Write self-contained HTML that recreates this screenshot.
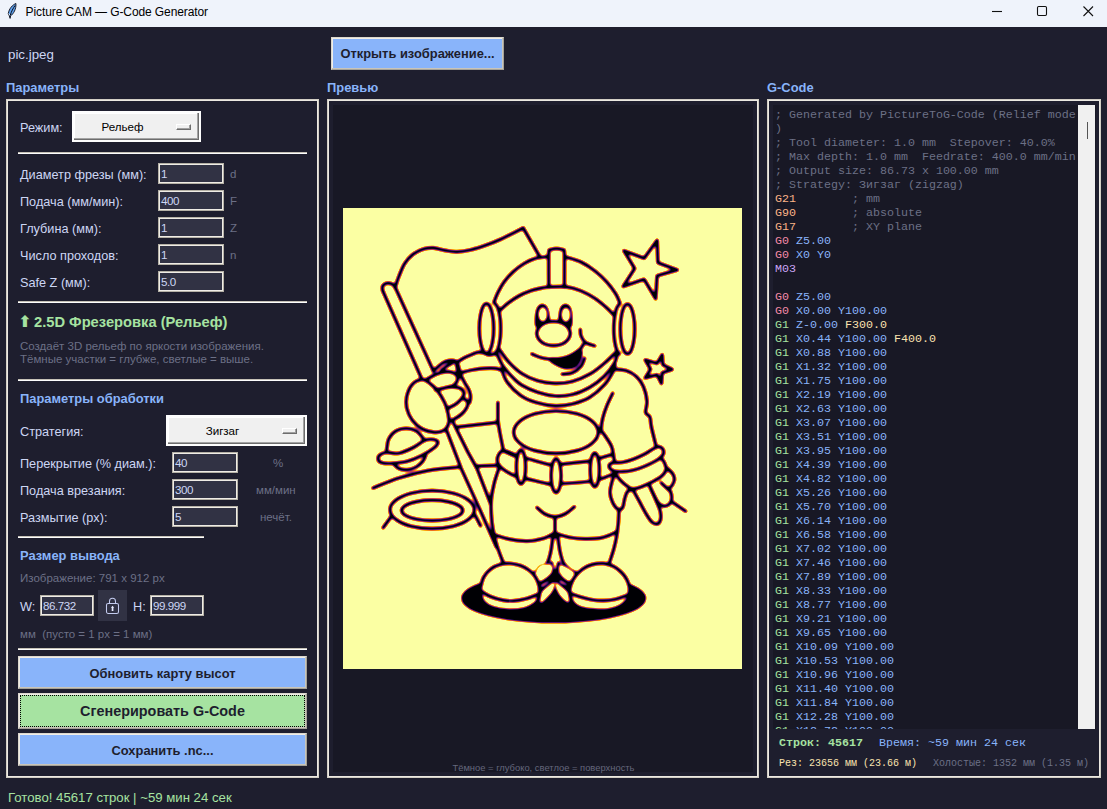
<!DOCTYPE html>
<html lang="ru">
<head>
<meta charset="utf-8">
<title>Picture CAM — G-Code Generator</title>
<style>
*{box-sizing:border-box;margin:0;padding:0}
html,body{width:1107px;height:809px;overflow:hidden;background:#1e1e2e}
body{position:relative;font-family:"Liberation Sans","DejaVu Sans",sans-serif;font-size:12.6px;color:#cdd6f4}
.a{position:absolute;white-space:nowrap;line-height:1}
.titlebar{left:0;top:0;width:1107px;height:27px;background:#eff3fb}
.ttl{left:25.6px;top:6px;font-size:12px;color:#000;letter-spacing:-0.1px}
.frame{border:1px solid #d2cec4;box-shadow:inset 0 0 0 1px #ece9e2}
.hd{color:#89b4fa;font-weight:bold;font-size:12.9px;margin-top:1px}
.lbl{color:#cdd6f4;font-size:12.7px;margin-top:1px}
.dim{color:#6c7086;font-size:11.5px}
.ent{background:#313244;border:1px solid #b5b1a6;box-shadow:inset 0 0 0 1px #efece6;height:21px;color:#cdd6f4;font-size:11.6px;letter-spacing:-0.45px;padding:4px 0 0 2px;line-height:1}
.sep{height:2px;border-top:1px solid #c6c2b7;border-bottom:1px solid #fdfdfd}
.om{background:#f0f0f0;border:2px solid #fdfdfd;box-shadow:inset -1px -1px 0 #6d6d6d, inset -2px -2px 0 #a3a3a3, inset 1px 1px 0 #fff;color:#000;font-size:11.6px;text-align:center}
.om i{position:absolute;display:block;width:15px;height:6px;background:#f0f0f0;border:1px solid;border-color:#ffffff #6d6d6d #6d6d6d #ffffff;box-shadow:inset -1px -1px 0 #a0a0a0}
.btn{border:1px solid;border-color:#dcd8ce #a5a298 #a5a298 #dcd8ce;box-shadow:inset -1px -1px 0 #c9c5ba,inset 1px 1px 0 #f0ede6;color:#1e1e2e;font-weight:bold;text-align:center}
.mono{font-family:"Liberation Mono","DejaVu Sans Mono",monospace}
pre.code{left:775px;top:108px;width:301px;font-family:"Liberation Mono","DejaVu Sans Mono",monospace;font-size:11.667px;line-height:14px;color:#cdd6f4;white-space:pre;overflow:hidden;height:621px}
.c{color:#6c7086}.o{color:#fab387}.r{color:#f38ba8}.m{color:#cba6f7}.g{color:#a6e3a1}.b{color:#89b4fa}.y{color:#f9e2af}
</style>
</head>
<body>
<!-- title bar -->
<div class="a titlebar"></div>
<svg class="a" style="left:7px;top:3px" width="12" height="17" viewBox="0 0 12 17"><path d="M8.9 0.5C5.6 1.8 2 5.6 1.3 10.6L2.2 12.6 3.1 15.4 3.6 12.9C6.4 10.9 9.4 6.2 8.9 0.5Z" fill="#5fa3f2" stroke="#0a0a14" stroke-width="0.9" stroke-linejoin="round"/><path d="M8.1 2.4C6.2 5.2 4.2 8.6 3.1 12.8" stroke="#0a0a14" stroke-width="1" fill="none"/><path d="M1.9 10.6l0.9 1.7" stroke="#fff" stroke-width="0.9"/></svg>
<div class="a ttl">Picture CAM — G-Code Generator</div>
<svg class="a" style="left:980px;top:0" width="127" height="27" viewBox="0 0 127 27"><g stroke="#111" stroke-width="1.1" fill="none"><path d="M12 11.5h10"/><rect x="57.5" y="6.5" width="9" height="9" rx="1.2"/><path d="M103.5 6.5l9.5 9.5M113 6.5l-9.5 9.5"/></g></svg>

<!-- top row -->
<div class="a lbl" style="left:8px;top:47px;font-size:13.3px">pic.jpeg</div>
<div class="a btn" style="left:331px;top:37px;width:173px;height:33px;background:#89b4fa;font-size:12.9px;padding-top:10px">Открыть изображение...</div>

<!-- section headers -->
<div class="a hd" style="left:6px;top:81px">Параметры</div>
<div class="a hd" style="left:327px;top:81px">Превью</div>
<div class="a hd" style="left:767px;top:81px">G-Code</div>

<!-- frames -->
<div class="a frame" style="left:6px;top:99px;width:313px;height:679px"></div>
<div class="a frame" style="left:327px;top:99px;width:432px;height:679px"></div>
<div class="a frame" style="left:767px;top:99px;width:334px;height:679px"></div>

<!-- LEFT PANEL -->
<div class="a lbl" style="left:20px;top:121px">Режим:</div>
<div class="a om" style="left:72px;top:111px;width:129px;height:31px;padding:8px 28px 0 0">Рельеф<i style="left:102px;top:11px"></i></div>
<div class="a sep" style="left:18px;top:152px;width:289px"></div>

<div class="a lbl" style="left:20px;top:168px">Диаметр фрезы (мм):</div>
<div class="a ent" style="left:158px;top:163px;width:66px">1</div>
<div class="a dim" style="left:230px;top:169px">d</div>
<div class="a lbl" style="left:20px;top:195px">Подача (мм/мин):</div>
<div class="a ent" style="left:158px;top:190px;width:66px">400</div>
<div class="a dim" style="left:230px;top:196px">F</div>
<div class="a lbl" style="left:20px;top:222px">Глубина (мм):</div>
<div class="a ent" style="left:158px;top:217px;width:66px">1</div>
<div class="a dim" style="left:230px;top:223px">Z</div>
<div class="a lbl" style="left:20px;top:249px">Число проходов:</div>
<div class="a ent" style="left:158px;top:244px;width:66px">1</div>
<div class="a dim" style="left:230px;top:250px">n</div>
<div class="a lbl" style="left:20px;top:276px">Safe Z (мм):</div>
<div class="a ent" style="left:158px;top:271px;width:66px">5.0</div>
<div class="a sep" style="left:18px;top:301px;width:289px"></div>

<div class="a" style="left:20px;top:315px;color:#a6e3a1;font-weight:bold;font-size:14.7px"><span style="display:inline-block;width:14px;font-family:'DejaVu Sans',sans-serif;font-size:16px;line-height:10px;margin-left:-2px;margin-right:2px">⬆</span>2.5D Фрезеровка (Рельеф)</div>
<div class="a dim" style="left:20px;top:341px">Создаёт 3D рельеф по яркости изображения.</div>
<div class="a dim" style="left:20px;top:354px">Тёмные участки = глубже, светлые = выше.</div>
<div class="a sep" style="left:18px;top:379px;width:289px"></div>

<div class="a hd" style="left:20px;top:392px">Параметры обработки</div>
<div class="a lbl" style="left:20px;top:425px">Стратегия:</div>
<div class="a om" style="left:166px;top:415px;width:141px;height:31px;padding:8px 28px 0 0">Зигзаг<i style="left:114px;top:11px"></i></div>
<div class="a lbl" style="left:20px;top:457px">Перекрытие (% диам.):</div>
<div class="a ent" style="left:172px;top:452px;width:66px">40</div>
<div class="a dim" style="left:273px;top:458px">%</div>
<div class="a lbl" style="left:20px;top:484px">Подача врезания:</div>
<div class="a ent" style="left:172px;top:479px;width:66px">300</div>
<div class="a dim" style="left:256px;top:485px">мм/мин</div>
<div class="a lbl" style="left:20px;top:511px">Размытие (px):</div>
<div class="a ent" style="left:172px;top:506px;width:66px">5</div>
<div class="a dim" style="left:260px;top:512px">нечёт.</div>
<div class="a sep" style="left:18px;top:536px;width:186px"></div>

<div class="a hd" style="left:20px;top:549px">Размер вывода</div>
<div class="a dim" style="left:20px;top:573px">Изображение: 791 x 912 px</div>
<div class="a lbl" style="left:20px;top:600px">W:</div>
<div class="a ent" style="left:40px;top:595px;width:54px">86.732</div>
<div class="a" style="left:98px;top:590px;width:29px;height:31px;background:#313244"></div>
<svg class="a" style="left:104px;top:596px" width="17" height="19" viewBox="0 0 17 19"><path d="M5.5 7.2V5.3a3 3 0 0 1 6 0V7.2" fill="none" stroke="#c3cbee" stroke-width="1.05"/><rect x="2.5" y="7.4" width="12" height="10.1" rx="1.7" fill="none" stroke="#c3cbee" stroke-width="1.05"/><path d="M7.7 11.2h1.7v3.9H7.7zM6.9 11.8l1.65-2.1 1.65 2.1z" fill="#e6ebff"/></svg>
<div class="a lbl" style="left:133px;top:600px">H:</div>
<div class="a ent" style="left:150px;top:595px;width:54px">99.999</div>
<div class="a dim" style="left:20px;top:629px">мм&nbsp;&nbsp;(пусто = 1 px = 1 мм)</div>
<div class="a sep" style="left:18px;top:648px;width:289px"></div>

<div class="a btn" style="left:18px;top:656px;width:289px;height:33px;background:#89b4fa;font-size:12.9px;padding-top:11px">Обновить карту высот</div>
<div class="a btn" style="left:18px;top:693px;width:289px;height:36px;background:#a6e3a1;font-size:14.4px;padding-top:10px">Сгенерировать G-Code<span class="a" style="left:1px;top:1px;right:1px;bottom:1px;border:1px dotted #000"></span></div>
<div class="a btn" style="left:18px;top:733px;width:289px;height:33px;background:#89b4fa;font-size:12.9px;padding-top:11px">Сохранить .nc...</div>

<div class="a lbl" style="left:8px;top:790px;color:#a6e3a1;font-size:13.2px">Готово! 45617 строк | ~59 мин 24 сек</div>

<!-- PREVIEW -->
<div class="a" style="left:333px;top:105px;width:420px;height:667px;background:#181825"></div>
<div class="a" style="left:343px;top:208px;width:399px;height:461px;background:#fcffa4"></div>
<!--ASTRO_START--><svg class="a" style="left:343px;top:208px" width="399" height="461" viewBox="343 208 399 461"><filter id="inf" filterUnits="userSpaceOnUse" x="343" y="208" width="399" height="461" color-interpolation-filters="sRGB"><feGaussianBlur stdDeviation="1.0"/><feComponentTransfer><feFuncR type="linear" slope="1.6" intercept="-0.15"/><feFuncG type="linear" slope="1.6" intercept="-0.15"/><feFuncB type="linear" slope="1.6" intercept="-0.15"/></feComponentTransfer><feComponentTransfer><feFuncR type="table" tableValues="0 .086 .259 .416 .576 .737 .867 .953 .988 .965 .988"/><feFuncG type="table" tableValues="0 .043 .039 .09 .149 .216 .318 .471 .647 .843 1"/><feFuncB type="table" tableValues=".016 .224 .408 .431 .404 .329 .227 .098 .039 .275 .643"/></feComponentTransfer></filter><g filter="url(#inf)" fill="none" stroke="#000" stroke-width="3.7" stroke-linecap="round" stroke-linejoin="round"><rect x="333" y="198" width="419" height="481" fill="#fff" stroke="none"/><path d="M644.5 598.3C644.5 602.2 639.9 606.6 632.3 609.9C624.8 613.2 612.2 616.5 599.1 618.4C586.0 620.3 568.8 621.5 553.7 621.5C538.6 621.5 521.4 620.3 508.3 618.4C495.2 616.5 482.6 613.2 475.1 609.9C467.5 606.6 462.9 602.2 462.9 598.3C462.9 594.4 467.5 590.0 475.1 586.7C482.6 583.4 495.2 580.1 508.3 578.2C521.4 576.3 538.6 575.1 553.7 575.1C568.8 575.1 586.0 576.3 599.1 578.2C612.2 580.1 624.8 583.4 632.3 586.7C639.9 590.0 644.5 594.4 644.5 598.3Z" fill="#000"/><path d="M395.3 287.0C395.9 285.2 397.3 280.3 398.9 276.4C400.5 272.5 402.3 267.1 404.7 263.4C407.1 259.7 410.3 256.4 413.4 254.0C416.5 251.6 420.1 249.9 423.5 248.9C426.9 247.9 430.1 247.7 433.7 247.9C437.3 248.2 441.3 249.8 445.2 250.4C449.1 251.1 452.4 251.9 456.8 251.8C461.2 251.7 466.5 250.8 471.3 249.7C476.1 248.6 480.9 247.0 485.7 245.3C490.5 243.6 495.4 241.7 500.2 239.5C505.0 237.3 510.9 234.2 514.7 232.3C518.5 230.4 521.8 228.7 523.2 228.0"/><path d="M523.2 228.0L540.0 257.2"/><path d="M382.6 290.5C382.6 289.8 381.9 287.6 382.4 286.5C382.8 285.4 384.2 284.2 385.3 283.6C386.4 283.1 387.7 283.0 389.0 283.2C390.3 283.4 391.9 283.8 393.0 284.6C394.1 285.4 395.1 287.4 395.5 288.0"/><path d="M382.6 290.5L421.9 379.2"/><path d="M395.5 288.0L433.4 371.1"/><path d="M446.8 431.0L461.2 468.4L481.4 512.9L496.4 547.0"/><path d="M452.5 421.0L467.9 452.1L477.0 468.5L490.3 503.0"/><path d="M493.9 302.3C494.6 300.6 496.3 295.8 498.0 292.4C499.7 288.9 501.7 285.1 504.3 281.6C506.9 278.1 510.1 274.6 513.4 271.6C516.7 268.6 520.6 265.7 524.2 263.5C527.8 261.3 531.2 259.6 535.0 258.5C538.8 257.4 544.8 257.0 546.8 256.7"/><path d="M565.8 256.9C568.3 257.8 576.0 259.6 581.0 262.0C586.0 264.4 591.2 268.0 595.5 271.4C599.8 274.8 603.6 278.5 607.0 282.2C610.4 285.9 613.5 290.3 615.7 293.8C617.9 297.3 619.3 301.6 620.0 303.2"/><path d="M499.8 310.5C501.1 309.3 504.7 305.6 507.9 303.2C511.1 300.8 514.9 298.1 518.8 296.0C522.7 293.9 527.5 292.0 531.4 290.6C535.3 289.2 539.3 288.5 542.3 287.9C545.3 287.3 545.5 287.2 549.5 287.0C553.5 286.8 561.2 286.2 566.5 286.8C571.8 287.4 576.2 288.9 581.0 290.9C585.8 292.9 591.2 295.9 595.5 298.8C599.8 301.7 603.9 305.4 607.0 308.2C610.1 311.0 613.1 314.3 614.3 315.5"/><path d="M548.8 287.0C548.8 281.4 548.6 259.7 548.8 253.5C549.0 247.3 549.4 250.8 550.2 250.0C551.0 249.2 552.0 249.0 553.5 248.8C555.0 248.6 557.9 248.6 559.5 248.8C561.1 249.0 562.2 249.2 563.0 250.0C563.8 250.8 564.2 247.3 564.4 253.5C564.6 259.7 564.4 281.4 564.4 287.0"/><path d="M493.7 328.5C493.7 332.7 493.3 337.4 492.7 341.0C492.1 344.6 491.1 348.1 490.1 350.2C489.1 352.2 487.7 353.5 486.5 353.5C485.3 353.5 483.9 352.2 482.9 350.2C481.9 348.1 480.9 344.6 480.3 341.0C479.7 337.4 479.3 332.7 479.3 328.5C479.3 324.3 479.7 319.6 480.3 316.0C480.9 312.4 481.9 308.9 482.9 306.8C483.9 304.8 485.3 303.5 486.5 303.5C487.7 303.5 489.1 304.8 490.1 306.8C491.1 308.9 492.1 312.4 492.7 316.0C493.3 319.6 493.7 324.3 493.7 328.5Z"/><path d="M495.1 303.7C495.5 304.2 496.6 305.1 497.3 306.5C498.0 307.9 498.6 309.9 499.1 312.1C499.6 314.3 500.0 317.0 500.3 319.7C500.6 322.5 500.7 325.6 500.7 328.5C500.7 331.4 500.6 334.5 500.3 337.3C500.0 340.0 499.6 342.7 499.1 344.9C498.6 347.1 498.0 349.1 497.3 350.5C496.6 351.9 495.5 352.8 495.1 353.3"/><path d="M634.7 329.0C634.7 333.2 634.3 337.9 633.7 341.5C633.1 345.1 632.1 348.6 631.1 350.7C630.1 352.7 628.7 354.0 627.5 354.0C626.3 354.0 624.9 352.7 623.9 350.7C622.9 348.6 621.9 345.1 621.3 341.5C620.7 337.9 620.3 333.2 620.3 329.0C620.3 324.8 620.7 320.1 621.3 316.5C621.9 312.9 622.9 309.4 623.9 307.3C624.9 305.3 626.3 304.0 627.5 304.0C628.7 304.0 630.1 305.3 631.1 307.3C632.1 309.4 633.1 312.9 633.7 316.5C634.3 320.1 634.7 324.8 634.7 329.0Z"/><path d="M619.4 353.8C619.0 353.3 617.9 352.4 617.2 351.0C616.5 349.6 615.9 347.6 615.4 345.4C614.9 343.2 614.5 340.5 614.2 337.8C613.9 335.0 613.8 331.9 613.8 329.0C613.8 326.1 613.9 323.0 614.2 320.2C614.5 317.5 614.9 314.8 615.4 312.6C615.9 310.4 616.5 308.4 617.2 307.0C617.9 305.6 619.0 304.7 619.4 304.2"/><path d="M499.0 349.0C500.6 351.2 504.9 357.9 508.7 362.0C512.5 366.1 516.9 370.4 521.7 373.5C526.5 376.6 532.1 379.2 537.6 380.8C543.1 382.4 549.2 383.3 555.0 383.4C560.8 383.5 566.5 383.0 572.3 381.5C578.1 380.0 584.4 377.2 589.7 374.2C595.0 371.2 599.9 367.0 604.2 363.4C608.5 359.8 613.8 354.3 615.7 352.5"/><path d="M497.3 354.7C498.3 356.6 500.5 362.4 503.1 366.3C505.8 370.2 510.1 374.8 513.2 377.9C516.3 381.0 517.6 382.7 521.7 385.1C525.8 387.5 532.1 390.5 537.6 392.3C543.1 394.1 549.2 395.6 555.0 396.0C560.8 396.4 566.5 395.9 572.3 394.5C578.1 393.1 584.4 390.3 589.7 387.3C595.0 384.3 600.1 380.4 604.2 376.4C608.3 372.4 612.1 367.0 614.3 363.4C616.5 359.8 616.7 356.1 617.2 354.7"/><path d="M501.6 369.2C502.5 371.4 504.1 377.9 507.2 382.2C510.3 386.5 515.5 391.8 520.3 395.2C525.1 398.6 530.4 400.8 536.2 402.6C542.0 404.4 549.0 405.6 555.0 405.8C561.0 406.0 566.5 405.4 572.3 404.0C578.1 402.6 584.4 400.5 589.7 397.4C595.0 394.2 600.4 389.3 604.2 385.1C608.1 380.9 611.0 375.5 612.8 372.1C614.6 368.7 614.6 366.0 615.0 364.8"/><path d="M537.1 326.0C535.3 324.2 536.7 316.1 537.0 313.0C537.3 309.9 538.1 308.5 539.0 307.2C539.9 305.9 541.2 305.4 542.3 305.4C543.4 305.4 544.7 305.9 545.6 307.2C546.5 308.5 547.2 310.2 547.6 313.0C548.0 315.8 549.5 321.8 547.8 324.0C546.0 326.2 538.9 327.8 537.1 326.0Z" fill="#000"/><path d="M570.1 326.0C571.8 324.2 570.8 316.1 570.6 313.0C570.4 309.9 569.6 308.5 568.8 307.2C567.9 305.9 566.6 305.4 565.5 305.4C564.4 305.4 563.0 305.9 562.2 307.2C561.4 308.5 560.8 310.2 560.5 313.0C560.2 315.8 558.8 321.8 560.4 324.0C562.0 326.2 568.4 327.8 570.1 326.0Z" fill="#000"/><path d="M546.9 314.3C546.9 315.4 546.7 316.7 546.4 317.7C546.0 318.7 545.4 319.6 544.8 320.2C544.3 320.8 543.5 321.1 542.8 321.1C542.1 321.1 541.3 320.8 540.8 320.2C540.2 319.6 539.6 318.7 539.2 317.7C538.9 316.7 538.7 315.4 538.7 314.3C538.7 313.2 538.9 311.9 539.2 310.9C539.6 309.9 540.2 309.0 540.8 308.4C541.3 307.8 542.1 307.5 542.8 307.5C543.5 307.5 544.3 307.8 544.8 308.4C545.4 309.0 546.0 309.9 546.4 310.9C546.7 311.9 546.9 313.2 546.9 314.3Z" fill="#fff" stroke-width="0.1"/><path d="M570.0 314.7C570.0 315.8 569.8 317.1 569.5 318.1C569.1 319.1 568.5 320.0 567.9 320.6C567.4 321.2 566.6 321.5 565.9 321.5C565.2 321.5 564.4 321.2 563.9 320.6C563.3 320.0 562.7 319.1 562.3 318.1C562.0 317.1 561.8 315.8 561.8 314.7C561.8 313.6 562.0 312.3 562.3 311.3C562.7 310.3 563.3 309.4 563.9 308.8C564.4 308.2 565.2 307.9 565.9 307.9C566.6 307.9 567.4 308.2 567.9 308.8C568.5 309.4 569.1 310.3 569.5 311.3C569.8 312.3 570.0 313.6 570.0 314.7Z" fill="#fff" stroke-width="0.1"/><path d="M570.3 333.5C570.3 335.5 569.4 337.8 568.0 339.6C566.6 341.4 564.3 343.0 561.9 344.1C559.5 345.1 556.3 345.7 553.5 345.7C550.7 345.7 547.5 345.1 545.1 344.1C542.7 343.0 540.4 341.4 539.0 339.6C537.6 337.8 536.7 335.5 536.7 333.5C536.7 331.5 537.6 329.2 539.0 327.4C540.4 325.6 542.7 324.0 545.1 322.9C547.5 321.9 550.7 321.3 553.5 321.3C556.3 321.3 559.5 321.9 561.9 322.9C564.3 324.0 566.6 325.6 568.0 327.4C569.4 329.2 570.3 331.5 570.3 333.5Z" fill="#fff"/><path d="M580.3 329.4C580.4 330.5 580.1 333.7 581.0 335.9C581.9 338.1 583.1 340.8 585.4 342.4C587.7 344.0 593.2 345.2 594.8 345.8"/><path d="M550.6 359.8C550.6 360.7 555.2 363.5 557.9 364.8C560.5 366.1 563.6 367.6 566.5 367.7C569.4 367.8 573.0 367.1 575.2 365.6C577.4 364.2 578.8 361.4 579.6 359.0C580.5 356.6 582.0 351.5 580.3 351.1C578.6 350.8 573.1 355.5 569.4 356.9C565.7 358.3 561.0 358.8 557.9 359.3C554.8 359.8 550.6 358.9 550.6 359.8Z" fill="#000"/><path d="M531.8 354.0C533.7 354.7 539.0 357.5 543.4 358.3C547.8 359.1 553.6 359.4 557.9 359.0C562.2 358.6 565.8 357.8 569.4 356.2C573.0 354.6 577.3 351.6 579.6 349.7C581.9 347.8 582.6 345.5 583.2 344.6"/><path d="M562.2 374.2C563.9 374.0 569.2 374.1 572.3 372.8C575.4 371.5 579.0 368.7 581.0 366.3C583.0 363.9 584.0 359.6 584.6 358.3"/><path d="M456.7 362.2C458.4 361.3 463.2 358.4 466.7 356.7C470.2 355.0 474.9 352.8 477.9 352.2C480.9 351.6 482.6 352.8 484.5 353.3C486.4 353.8 486.9 355.0 489.0 355.0C491.1 355.0 495.5 353.6 496.8 353.3"/><path d="M460.6 372.8C462.6 372.3 468.3 370.7 472.3 370.0C476.3 369.3 480.6 368.7 484.5 368.4C488.4 368.1 492.9 368.1 495.7 368.4C498.5 368.7 500.3 369.7 501.2 370.0"/><path d="M422.2 379.5C419.2 379.7 414.8 381.6 412.2 384.5C409.6 387.4 407.6 392.8 406.7 396.7C405.8 400.6 405.8 403.9 406.7 407.8C407.6 411.7 409.6 416.6 412.2 420.1C414.8 423.6 418.5 427.0 422.2 429.0C425.9 431.0 430.8 432.1 434.5 432.3C438.2 432.5 442.1 431.8 444.5 430.1C446.9 428.4 448.3 425.3 448.9 422.3C449.4 419.3 448.5 415.6 447.8 412.3C447.1 409.0 446.2 405.8 444.5 402.3C442.8 398.8 440.2 394.4 437.8 391.2C435.4 388.0 432.6 385.3 430.0 383.4C427.4 381.4 425.2 379.3 422.2 379.5Z"/><path d="M426.7 379.5C428.4 378.6 433.2 375.2 436.7 373.9C440.2 372.6 444.6 371.7 447.8 371.7C451.0 371.7 453.9 372.7 455.6 373.9C457.3 375.1 458.0 377.1 457.8 378.9C457.6 380.7 455.9 383.5 454.5 384.8C453.1 386.1 450.3 386.5 449.5 386.8"/><path d="M435.5 389.8C436.6 389.6 439.6 389.1 442.0 388.6C444.4 388.1 447.3 387.0 450.1 386.9C452.9 386.8 456.7 386.9 459.0 387.8C461.3 388.7 463.4 390.6 464.0 392.3C464.6 394.0 463.5 396.0 462.3 397.8C461.1 399.6 459.1 401.6 456.7 403.4C454.3 405.2 449.3 407.6 447.8 408.4"/><path d="M464.0 398.6C464.6 399.2 467.4 400.8 467.9 402.3C468.3 403.8 467.8 405.8 466.7 407.8C465.6 409.8 463.6 412.4 461.2 414.5C458.8 416.6 453.8 419.2 452.3 420.1"/><path d="M433.4 371.1C434.9 369.8 439.7 365.1 442.3 363.3C444.9 361.6 446.7 361.0 448.9 360.6C451.1 360.2 454.0 360.4 455.6 361.2C457.2 362.0 457.6 363.6 458.3 365.6C459.1 367.6 459.1 370.6 460.1 373.4C461.1 376.2 463.0 379.5 464.5 382.3C466.0 385.1 468.0 387.6 469.0 390.0C470.0 392.4 470.5 394.6 470.6 396.7C470.7 398.8 469.9 401.5 469.8 402.5"/><path d="M441.2 370.6C442.2 369.8 445.1 367.3 447.0 366.0C448.9 364.7 451.4 363.3 452.3 362.8"/><path d="M456.2 363.0C456.4 364.0 457.1 366.5 457.4 369.0C457.7 371.5 457.7 376.5 457.8 378.0"/><path d="M386.6 450.4C387.0 448.5 387.2 442.1 388.8 438.8C390.4 435.6 393.1 432.6 396.0 430.9C398.9 429.2 402.8 428.4 406.2 428.4C409.6 428.4 413.4 429.2 416.3 430.9C419.2 432.6 422.3 437.5 423.5 438.8"/><path d="M378.0 459.1C377.8 457.8 378.7 455.8 380.1 454.7C381.5 453.6 383.5 452.7 386.6 452.5C389.7 452.3 394.4 454.1 398.9 453.3C403.4 452.5 409.0 449.7 413.4 447.5C417.8 445.3 421.6 441.6 425.0 440.3C428.4 439.0 431.5 439.1 433.7 439.5C435.9 439.9 438.0 440.9 438.0 442.4C438.0 443.8 436.3 446.0 433.7 448.2C431.1 450.4 426.5 453.2 422.1 455.4C417.8 457.6 412.7 459.9 407.6 461.2C402.5 462.5 396.0 463.1 391.7 463.4C387.4 463.6 383.9 463.4 381.6 462.7C379.3 462.0 378.2 460.4 378.0 459.1Z"/><path d="M393.9 464.1C394.7 464.8 396.6 467.5 398.9 468.5C401.2 469.5 404.7 470.1 407.6 469.9C410.5 469.6 413.8 468.4 416.3 467.0C418.8 465.6 421.2 463.1 422.8 461.2C424.4 459.3 425.2 456.4 425.7 455.4"/><path d="M372.9 488.0C377.2 486.3 389.7 480.8 398.9 477.9C408.1 475.0 417.8 472.4 427.9 470.6C438.0 468.8 454.4 467.6 459.7 467.0"/><path d="M474.4 509.7C474.4 512.9 472.3 516.5 468.7 519.2C465.2 521.9 459.4 524.6 453.3 526.2C447.2 527.7 439.2 528.7 432.2 528.7C425.2 528.7 417.2 527.7 411.1 526.2C405.0 524.6 399.2 521.9 395.7 519.2C392.1 516.5 390.0 512.9 390.0 509.7C390.0 506.5 392.1 502.9 395.7 500.2C399.2 497.5 405.0 494.8 411.1 493.2C417.2 491.7 425.2 490.7 432.2 490.7C439.2 490.7 447.2 491.7 453.3 493.2C459.4 494.8 465.2 497.5 468.7 500.2C472.3 502.9 474.4 506.5 474.4 509.7Z"/><path d="M462.8 510.4C462.8 512.1 461.3 514.0 458.7 515.5C456.2 517.0 451.9 518.4 447.5 519.2C443.1 520.1 437.3 520.6 432.2 520.6C427.1 520.6 421.3 520.1 416.9 519.2C412.5 518.4 408.2 517.0 405.7 515.5C403.1 514.0 401.6 512.1 401.6 510.4C401.6 508.7 403.1 506.8 405.7 505.3C408.2 503.8 412.5 502.4 416.9 501.6C421.3 500.7 427.1 500.2 432.2 500.2C437.3 500.2 443.1 500.7 447.5 501.6C451.9 502.4 456.2 503.8 458.7 505.3C461.3 506.8 462.8 508.7 462.8 510.4Z"/><path d="M391.0 516.9L383.0 527.8"/><path d="M474.2 513.5L480.6 525.9"/><path d="M497.9 402.3L497.9 422.3"/><path d="M458.3 426.9L497.9 422.3"/><path d="M498.0 422.0C498.4 424.1 499.3 430.0 500.2 434.5C501.1 439.0 502.6 446.5 503.1 448.9"/><path d="M476.1 466.2L498.2 465.4"/><path d="M612.8 393.1C611.8 395.2 608.7 401.2 607.0 405.4C605.3 409.6 603.7 414.3 602.7 418.4C601.8 422.5 601.0 427.3 601.3 430.0C601.5 432.7 602.5 431.8 604.2 434.5C605.9 437.2 609.8 442.4 611.4 446.0C613.0 449.6 613.1 453.5 613.6 456.2C614.1 458.9 614.4 461.0 614.5 462.0"/><path d="M598.3 432.2C598.3 435.7 596.2 439.7 592.6 442.8C589.1 445.9 583.3 448.8 577.1 450.6C571.0 452.3 563.0 453.4 556.0 453.4C549.0 453.4 541.0 452.3 534.9 450.6C528.7 448.8 522.9 445.9 519.4 442.8C515.8 439.7 513.7 435.7 513.7 432.2C513.7 428.7 515.8 424.7 519.4 421.6C522.9 418.5 528.7 415.6 534.9 413.8C541.0 412.1 549.0 411.0 556.0 411.0C563.0 411.0 571.0 412.1 577.1 413.8C583.3 415.6 589.1 418.5 592.6 421.6C596.2 424.7 598.3 428.7 598.3 432.2Z"/><path d="M514.7 454.7C512.8 454.0 505.9 450.4 503.1 450.6C500.3 450.9 498.9 454.1 498.0 456.2C497.1 458.3 497.1 461.2 498.0 463.4C498.9 465.6 500.1 467.0 503.1 469.2C506.1 471.4 512.1 474.8 515.9 476.4C519.7 478.0 520.2 477.3 526.0 478.6C531.8 479.9 544.6 483.5 550.6 484.4C556.6 485.2 555.4 484.2 561.9 483.7C568.4 483.2 583.4 482.2 589.7 481.5C596.0 480.8 595.9 480.5 599.8 479.3C603.6 478.1 610.6 475.1 612.8 474.2"/><path d="M503.1 450.8C505.2 451.7 512.1 454.9 515.9 456.2C519.7 457.4 520.2 456.9 526.0 458.3C531.8 459.7 544.6 463.8 550.6 464.8C556.6 465.8 555.4 464.7 561.9 464.1C568.4 463.5 583.4 462.2 589.7 461.2C596.0 460.2 596.2 459.4 599.8 458.3C603.4 457.2 609.5 455.3 611.4 454.7"/><path d="M525.6 467.0C525.6 469.9 525.4 473.1 525.0 475.6C524.6 478.1 524.0 480.5 523.3 481.9C522.6 483.3 521.8 484.2 521.0 484.2C520.2 484.2 519.4 483.3 518.7 481.9C518.0 480.5 517.4 478.1 517.0 475.6C516.6 473.1 516.4 469.9 516.4 467.0C516.4 464.1 516.6 460.9 517.0 458.4C517.4 455.9 518.0 453.5 518.7 452.1C519.4 450.7 520.2 449.8 521.0 449.8C521.8 449.8 522.6 450.7 523.3 452.1C524.0 453.5 524.6 455.9 525.0 458.4C525.4 460.9 525.6 464.1 525.6 467.0Z" fill="#fff"/><path d="M561.1 475.7C561.1 478.5 560.8 481.7 560.4 484.2C560.0 486.7 559.3 489.0 558.6 490.4C557.9 491.8 556.9 492.7 556.1 492.7C555.3 492.7 554.3 491.8 553.6 490.4C552.9 489.0 552.2 486.7 551.8 484.2C551.4 481.7 551.1 478.5 551.1 475.7C551.1 472.9 551.4 469.7 551.8 467.2C552.2 464.7 552.9 462.4 553.6 461.0C554.3 459.6 555.3 458.7 556.1 458.7C556.9 458.7 557.9 459.6 558.6 461.0C559.3 462.4 560.0 464.7 560.4 467.2C560.8 469.7 561.1 472.9 561.1 475.7Z" fill="#fff"/><path d="M599.4 469.9C599.4 472.7 599.2 475.9 598.8 478.4C598.4 480.9 597.8 483.2 597.1 484.6C596.4 486.0 595.6 486.9 594.8 486.9C594.0 486.9 593.2 486.0 592.5 484.6C591.8 483.2 591.2 480.9 590.8 478.4C590.4 475.9 590.2 472.7 590.2 469.9C590.2 467.1 590.4 463.9 590.8 461.4C591.2 458.9 591.8 456.6 592.5 455.2C593.2 453.8 594.0 452.9 594.8 452.9C595.6 452.9 596.4 453.8 597.1 455.2C597.8 456.6 598.4 458.9 598.8 461.4C599.2 463.9 599.4 467.1 599.4 469.9Z" fill="#fff"/><path d="M499.2 467.4C498.4 470.0 495.5 477.9 494.2 483.2C492.9 488.5 491.8 493.7 491.3 499.0C490.8 504.3 491.0 509.6 491.3 514.9C491.6 520.2 492.2 525.4 493.2 530.7C494.2 536.0 495.5 541.2 497.2 546.5C498.9 551.8 502.1 559.7 503.1 562.3"/><path d="M536.9 507.5C538.2 508.6 541.8 512.4 544.8 514.0C547.8 515.6 551.6 516.9 555.0 516.9C558.4 516.9 561.9 515.7 565.1 514.0C568.4 512.3 572.9 508.0 574.5 506.8"/><path d="M555.0 516.9L555.0 537.0"/><path d="M551.5 563.0C551.8 564.3 552.8 568.7 553.4 571.0C554.0 573.3 554.7 576.0 555.0 577.0"/><path d="M558.8 563.0C558.5 564.3 557.4 568.7 556.8 571.0C556.2 573.3 555.3 576.0 555.0 577.0"/><path d="M495.7 535.3C497.8 535.9 502.8 537.9 508.0 538.9C513.2 539.9 520.8 541.2 526.8 541.1C532.8 541.0 539.6 539.5 544.2 538.2C548.8 536.9 552.6 534.0 554.3 533.1"/><path d="M557.2 533.9C559.4 534.5 565.6 536.7 570.2 537.5C574.8 538.3 579.7 538.8 584.7 538.9C589.7 539.0 595.9 538.8 600.0 538.2C604.1 537.6 606.6 536.4 609.4 535.3C612.2 534.2 615.5 532.3 616.7 531.7"/><path d="M552.8 537.5C552.4 539.9 551.7 547.7 550.7 552.0C549.8 556.3 548.7 560.6 547.1 563.5C545.5 566.4 543.5 567.7 541.3 569.3C539.1 570.9 535.2 572.4 534.0 573.0"/><path d="M557.9 537.5C558.3 539.9 559.1 547.7 560.1 552.0C561.1 556.3 562.0 560.5 563.7 563.5C565.4 566.5 568.2 568.4 570.2 570.0C572.2 571.6 575.0 572.5 576.0 573.0"/><path d="M618.9 510.6C618.8 512.4 618.8 517.4 618.4 521.6C618.0 525.8 617.5 531.4 616.7 536.0C615.9 540.6 615.0 544.6 613.8 549.1C612.6 553.6 610.1 560.5 609.4 562.8"/><path d="M614.5 369.2C616.4 369.4 622.4 369.4 626.0 370.6C629.6 371.8 633.3 373.8 636.2 376.4C639.1 379.0 641.6 382.4 643.4 386.5C645.2 390.6 646.6 396.6 647.0 401.0C647.4 405.4 645.1 410.0 645.6 412.6C646.1 415.2 648.9 414.5 649.9 416.9C650.9 419.3 650.4 422.4 651.4 427.0C652.4 431.6 655.0 441.7 655.7 444.6"/><path d="M608.9 466.1C608.9 464.8 610.5 463.4 612.8 462.8C615.1 462.2 619.3 463.0 622.8 462.3C626.3 461.6 630.2 460.3 633.9 458.9C637.6 457.5 641.8 455.7 645.1 453.9C648.5 452.1 651.6 449.5 654.0 448.3C656.4 447.1 657.9 446.4 659.5 446.7C661.1 447.0 662.8 448.6 663.4 450.0C664.0 451.4 663.9 453.3 662.9 455.0C661.9 456.7 660.3 458.1 657.3 460.0C654.3 461.9 649.0 464.4 645.1 466.1C641.2 467.8 637.6 469.1 633.9 470.0C630.2 470.9 626.3 471.6 622.8 471.7C619.3 471.8 615.1 471.5 612.8 470.6C610.5 469.7 608.9 467.4 608.9 466.1Z"/><path d="M615.6 473.9C616.4 475.0 618.7 478.6 620.6 480.6C622.5 482.7 625.3 484.8 627.3 486.2C629.3 487.6 630.4 488.8 632.8 488.9C635.2 489.0 638.4 487.9 641.7 486.7C645.0 485.5 649.5 483.4 652.8 481.7C656.1 479.9 659.5 478.2 661.7 476.2C663.9 474.2 665.7 471.7 666.2 469.5C666.7 467.3 665.2 464.6 664.5 462.8C663.8 461.0 662.2 459.5 661.7 458.9"/><path d="M667.3 468.4C668.2 469.3 671.7 472.0 672.9 473.9C674.1 475.8 674.6 477.6 674.5 479.5C674.4 481.4 673.2 483.6 672.3 485.1C671.4 486.6 669.5 487.8 669.0 488.4"/><path d="M661.2 482.8L669.0 490.1"/><path d="M671.8 501.7L685.7 511.2"/><path d="M649.5 485.6C650.2 487.2 652.5 492.2 654.0 495.1C655.5 498.0 656.7 501.0 658.4 502.9C660.1 504.8 662.1 506.0 664.0 506.2C665.9 506.4 668.2 505.3 669.5 504.0C670.8 502.7 671.6 500.4 671.8 498.4C672.0 496.3 671.1 493.2 670.6 491.7C670.1 490.2 669.3 489.9 669.0 489.5"/><path d="M633.4 490.6C634.4 492.5 637.4 497.8 639.5 501.7C641.6 505.6 644.2 510.6 646.2 514.0C648.2 517.4 649.9 520.1 651.7 521.8C653.6 523.5 655.8 524.4 657.3 524.0C658.8 523.6 660.1 521.7 660.6 519.5C661.1 517.3 660.9 513.9 660.1 510.6C659.3 507.3 657.2 503.2 655.6 499.5C654.0 495.8 651.4 490.2 650.6 488.4"/><path d="M614.5 474.5C614.0 475.9 612.5 479.8 611.7 482.8C611.0 485.9 609.8 489.5 610.0 492.8C610.2 496.1 611.4 500.1 612.8 502.9C614.2 505.7 616.7 508.8 618.4 509.5C620.1 510.2 621.8 509.0 622.8 507.3C623.8 505.6 623.8 502.1 624.5 499.5C625.2 496.9 625.9 493.4 627.3 491.7C628.7 490.0 631.9 489.9 632.8 489.5"/><path d="M559.5 565.1C560.7 564.3 563.3 565.0 565.9 566.5C568.5 567.9 574.4 571.1 575.0 573.6C575.7 576.1 571.7 580.6 569.8 581.4C567.9 582.2 565.3 579.8 563.4 578.1C561.6 576.5 559.5 573.8 558.9 571.6C558.2 569.5 558.4 566.0 559.5 565.1Z" fill="#fff" stroke-width="1.2"/><path d="M559.5 579.9C560.3 579.9 562.6 581.2 564.2 582.2C565.8 583.2 569.1 585.4 569.1 585.9C569.1 586.3 565.8 585.4 564.2 584.8C562.6 584.2 560.3 583.0 559.5 582.2C558.7 581.4 558.7 579.9 559.5 579.9Z" fill="#fff" stroke-width="1.2"/><path d="M555.0 581.7C555.8 581.0 558.4 583.4 560.6 585.3C562.8 587.2 566.9 590.3 568.3 593.1C569.7 596.0 570.0 601.6 568.9 602.5C567.9 603.3 564.1 600.4 561.9 598.2C559.8 596.0 557.2 592.0 556.1 589.2C554.9 586.5 554.3 582.3 555.0 581.7Z" fill="#fff" stroke-width="1.2"/><path d="M538.9 566.2C541.8 563.8 548.9 563.4 551.1 564.3C553.4 565.2 553.2 569.2 552.4 571.4C551.7 573.7 549.0 576.2 546.7 577.9C544.5 579.7 541.1 581.7 538.9 581.8C536.7 582.0 533.7 581.3 533.7 578.7C533.7 576.1 536.0 568.6 538.9 566.2Z" fill="#fff" stroke-width="1.2"/><path d="M541.0 585.1C541.8 584.2 544.5 582.8 546.2 582.0C547.9 581.1 551.3 579.5 551.3 579.9C551.3 580.3 547.8 583.3 546.2 584.6C544.6 585.8 542.4 587.4 541.5 587.4C540.7 587.5 540.2 586.0 541.0 585.1Z" fill="#fff" stroke-width="1.2"/><path d="M554.5 582.0C555.7 582.5 554.9 586.7 553.9 589.2C552.8 591.7 550.4 594.7 548.2 597.0C545.9 599.3 541.6 603.8 540.4 603.1C539.2 602.5 539.9 595.8 541.0 593.1C542.1 590.3 544.6 588.4 546.9 586.6C549.1 584.7 553.4 581.6 554.5 582.0Z" fill="#fff" stroke-width="1.2"/><path d="M480.6 590.5C480.6 591.7 480.1 592.8 480.6 594.8C481.1 596.8 481.8 600.0 483.8 602.2C485.8 604.4 488.6 606.4 492.8 607.8C497.0 609.1 503.6 610.1 509.0 610.3C514.4 610.4 521.0 609.8 525.3 608.7C529.6 607.6 532.7 605.7 535.0 603.8C537.3 601.9 538.1 599.1 538.9 597.3C539.6 595.5 539.5 595.1 539.5 593.2C539.5 591.3 539.7 588.5 539.1 585.9C538.5 583.3 537.5 580.4 535.9 577.8C534.3 575.2 531.9 572.4 529.3 570.4C526.7 568.4 523.5 566.8 520.4 565.6C517.3 564.5 514.0 563.7 510.7 563.5C507.4 563.3 504.2 563.4 500.9 564.3C497.6 565.2 494.0 566.7 491.1 568.8C488.2 570.9 485.6 573.9 483.8 577.0C482.1 580.1 481.1 585.2 480.6 587.5C480.1 589.8 480.6 589.3 480.6 590.5Z" fill="#fff"/><path d="M480.6 590.8C482.2 591.8 486.7 595.0 490.3 596.5C493.9 598.0 498.6 599.4 502.5 600.1C506.4 600.8 509.8 601.2 513.9 600.9C518.0 600.6 522.7 599.6 526.9 598.5C531.1 597.4 537.1 594.8 539.1 594.0"/><path d="M569.8 590.0C569.7 592.0 569.6 594.4 570.3 596.7C571.0 599.0 571.9 601.8 573.8 603.7C575.7 605.6 578.1 607.1 581.7 608.2C585.4 609.3 591.1 610.0 595.7 610.2C600.4 610.5 605.5 610.4 609.6 609.7C613.7 609.0 617.5 607.9 620.5 606.2C623.5 604.5 626.1 601.6 627.5 599.7C628.9 597.8 628.7 596.8 629.0 594.8C629.3 592.8 629.8 590.3 629.5 587.8C629.2 585.3 628.3 582.5 627.0 579.9C625.7 577.3 623.7 574.6 621.5 572.4C619.3 570.1 616.6 567.9 613.6 566.4C610.6 564.9 607.1 563.7 603.6 563.4C600.1 563.1 596.2 563.5 592.7 564.4C589.2 565.3 585.7 566.8 582.7 568.9C579.7 571.0 576.8 574.2 574.8 576.9C572.8 579.5 571.6 582.6 570.8 584.8C570.0 587.0 569.9 588.0 569.8 590.0Z" fill="#fff"/><path d="M569.8 593.3C571.5 593.9 576.1 595.6 579.8 596.7C583.4 597.8 587.7 599.0 591.7 599.7C595.7 600.4 599.6 600.8 603.6 600.7C607.6 600.6 611.3 600.2 615.5 599.2C619.7 598.2 626.8 595.5 629.0 594.8"/><path d="M657.1 240.3L657.9 262.7L677.4 269.9L657.1 275.7L655.7 298.8L644.1 279.3L623.1 286.5L634.7 268.5L623.9 250.7L644.1 258.3Z"/><path d="M662.2 354.7L662.9 364.8L672.3 369.5L662.2 372.8L661.5 383.7L657.1 374.7L645.1 377.9L650.6 369.2L645.1 359.8L657.1 363.4Z"/></g></svg><!--ASTRO_END-->
<div class="a" style="left:333px;top:763px;width:421px;text-align:center;color:#64677c;font-size:9.4px">Тёмное = глубоко, светлое = поверхность</div>

<!-- GCODE -->
<div class="a" style="left:773px;top:105px;width:323px;height:624px;background:#181825"></div>
<div class="a" style="left:1078px;top:105px;width:17px;height:624px;background:#f0f0f0"></div>
<div class="a" style="left:1087px;top:122px;width:1px;height:17px;background:#555"></div>
<pre class="a code"><span class="c">; Generated by PictureToG-Code (Relief mode
)
; Tool diameter: 1.0 mm  Stepover: 40.0%
; Max depth: 1.0 mm  Feedrate: 400.0 mm/min
; Output size: 86.73 x 100.00 mm
; Strategy: Зигзаг (zigzag)</span>
<span class="o">G21</span>        <span class="c">; mm</span>
<span class="o">G90</span>        <span class="c">; absolute</span>
<span class="o">G17</span>        <span class="c">; XY plane</span>
<span class="r">G0</span> <span class="b">Z5.00</span>
<span class="r">G0</span> <span class="b">X0 Y0</span>
<span class="m">M03</span>

<span class="r">G0</span> <span class="b">Z5.00</span>
<span class="r">G0</span> <span class="b">X0.00 Y100.00</span>
<span class="g">G1</span> <span class="b">Z-0.00</span> <span class="y">F300.0</span>
<span class="g">G1</span> <span class="b">X0.44 Y100.00</span> <span class="y">F400.0</span>
<span class="g">G1</span> <span class="b">X0.88 Y100.00</span>
<span class="g">G1</span> <span class="b">X1.32 Y100.00</span>
<span class="g">G1</span> <span class="b">X1.75 Y100.00</span>
<span class="g">G1</span> <span class="b">X2.19 Y100.00</span>
<span class="g">G1</span> <span class="b">X2.63 Y100.00</span>
<span class="g">G1</span> <span class="b">X3.07 Y100.00</span>
<span class="g">G1</span> <span class="b">X3.51 Y100.00</span>
<span class="g">G1</span> <span class="b">X3.95 Y100.00</span>
<span class="g">G1</span> <span class="b">X4.39 Y100.00</span>
<span class="g">G1</span> <span class="b">X4.82 Y100.00</span>
<span class="g">G1</span> <span class="b">X5.26 Y100.00</span>
<span class="g">G1</span> <span class="b">X5.70 Y100.00</span>
<span class="g">G1</span> <span class="b">X6.14 Y100.00</span>
<span class="g">G1</span> <span class="b">X6.58 Y100.00</span>
<span class="g">G1</span> <span class="b">X7.02 Y100.00</span>
<span class="g">G1</span> <span class="b">X7.46 Y100.00</span>
<span class="g">G1</span> <span class="b">X7.89 Y100.00</span>
<span class="g">G1</span> <span class="b">X8.33 Y100.00</span>
<span class="g">G1</span> <span class="b">X8.77 Y100.00</span>
<span class="g">G1</span> <span class="b">X9.21 Y100.00</span>
<span class="g">G1</span> <span class="b">X9.65 Y100.00</span>
<span class="g">G1</span> <span class="b">X10.09 Y100.00</span>
<span class="g">G1</span> <span class="b">X10.53 Y100.00</span>
<span class="g">G1</span> <span class="b">X10.96 Y100.00</span>
<span class="g">G1</span> <span class="b">X11.40 Y100.00</span>
<span class="g">G1</span> <span class="b">X11.84 Y100.00</span>
<span class="g">G1</span> <span class="b">X12.28 Y100.00</span>
<span class="g">G1</span> <span class="b">X12.72 Y100.00</span></pre>
<div class="a mono g" style="left:779px;top:738px;font-size:11.667px;font-weight:bold">Строк: 45617</div>
<div class="a mono b" style="left:879px;top:738px;font-size:11.667px">Время: ~59 мин 24 сек</div>
<div class="a mono y" style="left:779px;top:759px;font-size:10px">Рез: 23656 мм (23.66 м)</div>
<div class="a mono c" style="left:933px;top:759px;font-size:10px">Холостые: 1352 мм (1.35 м)</div>
</body>
</html>
